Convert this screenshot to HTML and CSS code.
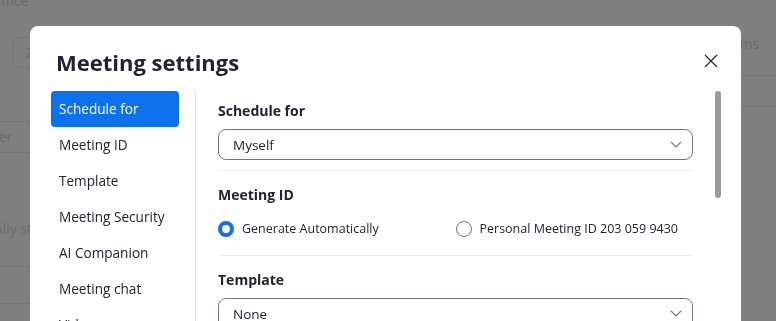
FILE: index.html
```html
<!DOCTYPE html>
<html lang="en">
<head>
    <meta charset="UTF-8">
    <meta name="viewport" content="width=device-width, initial-scale=1.0">
    <title>Meeting settings</title>
    <link rel="stylesheet" href="styles.css">
</head>
<body>
    <div class="page">
        <div class="page-left">
            <div class="bg-title">Office</div>
            <div class="bg-input">2</div>
            <div class="bg-row">Number</div>
            <div class="bg-text">Automatically start</div>
            <div class="bg-row bg-row-alt">1</div>
        </div>
        <div class="page-right">
            <div class="bg-tab">Rooms</div>
            <div class="bg-row"></div>
        </div>
    </div>

    <div class="overlay">
        <div class="modal">
            <div class="modal-head">
                <h1>Meeting settings</h1>
                <button class="close-btn" aria-label="Close">
                    <svg width="14" height="14" viewBox="0 0 14 14">
                        <path d="M1 1 L13 13 M13 1 L1 13" stroke="#232333" stroke-width="1.2" fill="none"/>
                    </svg>
                </button>
            </div>
            <div class="modal-body">
                <nav class="side-nav">
                    <a class="nav-item active">Schedule for</a>
                    <a class="nav-item">Meeting ID</a>
                    <a class="nav-item">Template</a>
                    <a class="nav-item">Meeting Security</a>
                    <a class="nav-item">AI Companion</a>
                    <a class="nav-item">Meeting chat</a>
                    <a class="nav-item">Video</a>
                </nav>
                <div class="content">
                    <div class="section first">
                        <div class="section-label">Schedule for</div>
                        <div class="select">
                            <span>Myself</span>
                            <svg class="chevron" width="12" height="7" viewBox="0 0 12 7">
                                <path d="M1 1 L6 6 L11 1" stroke="#6e7680" stroke-width="1.2" fill="none"/>
                            </svg>
                        </div>
                    </div>
                    <div class="section">
                        <div class="section-label">Meeting ID</div>
                        <div class="radio-row">
                            <label class="radio checked"><span class="dot"></span>Generate Automatically</label>
                            <label class="radio"><span class="dot"></span>Personal Meeting ID 203 059 9430</label>
                        </div>
                    </div>
                    <div class="section">
                        <div class="section-label">Template</div>
                        <div class="select">
                            <span>None</span>
                            <svg class="chevron" width="12" height="7" viewBox="0 0 12 7">
                                <path d="M1 1 L6 6 L11 1" stroke="#6e7680" stroke-width="1.2" fill="none"/>
                            </svg>
                        </div>
                    </div>
                </div>
                <div class="scroll-track"><div class="scroll-thumb"></div></div>
            </div>
        </div>
    </div>
</body>
</html>
```

FILE: styles.css
```css
body {
    margin: 0;
    font-family: 'Open Sans', 'Noto Sans', sans-serif;
    color: #232333;
    background: #fff;
    overflow: hidden;
}

/* page behind the dialog */
.page {
    display: flex;
    justify-content: space-between;
    height: 321px;
    color: #d6d6d6;
    font-size: 14px;
}
.page-left {
    width: 30px;
    overflow: hidden;
}
.bg-title {
    margin: -9px 0 0 -10px;
    line-height: 20px;
}
.bg-input {
    margin: 26px 0 0 12px;
    width: 60px;
    height: 29px;
    line-height: 29px;
    padding-left: 12px;
    border: 1px solid #e8e8e8;
    border-radius: 8px;
}
.bg-row {
    margin-top: 53px;
    height: 30px;
    line-height: 30px;
    border-top: 1px solid #ebebeb;
    border-bottom: 1px solid #ebebeb;
    white-space: nowrap;
}
.page-left .bg-row {
    text-indent: -42px;
}
.bg-text {
    margin: 66px 0 0 -72px;
    line-height: 20px;
    white-space: nowrap;
}
.page-left .bg-row-alt {
    margin-top: 27px;
    height: 36px;
    line-height: 36px;
    text-indent: -6px;
}
.page-right {
    width: 35px;
    overflow: hidden;
}
.bg-tab {
    margin: 34px 0 0 -1px;
    line-height: 20px;
    height: 41px;
    border-bottom: 1px solid #ebebeb;
    white-space: nowrap;
    text-indent: -26px;
}
.page-right .bg-row {
    margin: 0;
    border-top: none;
}

/* dialog */
.overlay {
    position: fixed;
    inset: 0;
    background: rgba(0, 0, 0, 0.5);
    padding: 26px 0 0 30px;
}
.modal {
    width: 711px;
    height: 340px;
    background: #fff;
    border-radius: 8px;
    overflow: hidden;
}
.modal-head {
    display: flex;
    justify-content: space-between;
    align-items: center;
    padding: 21px 23px 0 26px;
}
.modal-head h1 {
    margin: 0;
    font-size: 22px;
    line-height: 30px;
    font-weight: 700;
    color: #232333;
}
.close-btn {
    border: none;
    background: none;
    padding: 0;
    width: 14px;
    height: 14px;
    margin-top: -2px;
    cursor: pointer;
}
.modal-body {
    display: flex;
    margin-top: 14px;
    padding-left: 21px;
}
.side-nav {
    width: 128px;
    padding-right: 16px;
    border-right: 1px solid #e4e4e7;
    flex-shrink: 0;
}
.nav-item {
    display: block;
    height: 36px;
    line-height: 36px;
    padding-left: 8px;
    font-size: 13.6px;
    border-radius: 4px;
    color: #232333;
}
.nav-item.active {
    background: #0e72ed;
    color: #fff;
}
.content {
    width: 475px;
    padding-left: 22px;
    flex-shrink: 0;
}
.section {
    padding: 14px 0 16px;
    border-bottom: 1px solid #ededf0;
}
.section.first {
    padding-top: 10px;
    padding-bottom: 10px;
}
.section-label {
    font-size: 14px;
    font-weight: 700;
    line-height: 20px;
    margin-bottom: 8px;
}
.select {
    display: flex;
    justify-content: space-between;
    align-items: center;
    height: 29px;
    padding: 0 10px 0 14px;
    border: 1px solid #747487;
    border-radius: 8px;
    font-size: 13.5px;
}
.radio-row {
    display: grid;
    grid-template-columns: 1fr 1fr;
    margin-top: 14px;
}
.radio {
    display: flex;
    align-items: center;
    gap: 8px;
    font-size: 12.5px;
    line-height: 20px;
}
.dot {
    width: 14px;
    height: 14px;
    border: 1px solid #6e7680;
    border-radius: 50%;
    box-sizing: content-box;
}
.radio.checked .dot {
    width: 8px;
    height: 8px;
    border: 4px solid #0e72ed;
}
.scroll-track {
    margin-left: 22px;
    width: 6px;
}
.scroll-thumb {
    height: 107px;
    background: #9b9b9b;
    border-radius: 3px;
}
```
